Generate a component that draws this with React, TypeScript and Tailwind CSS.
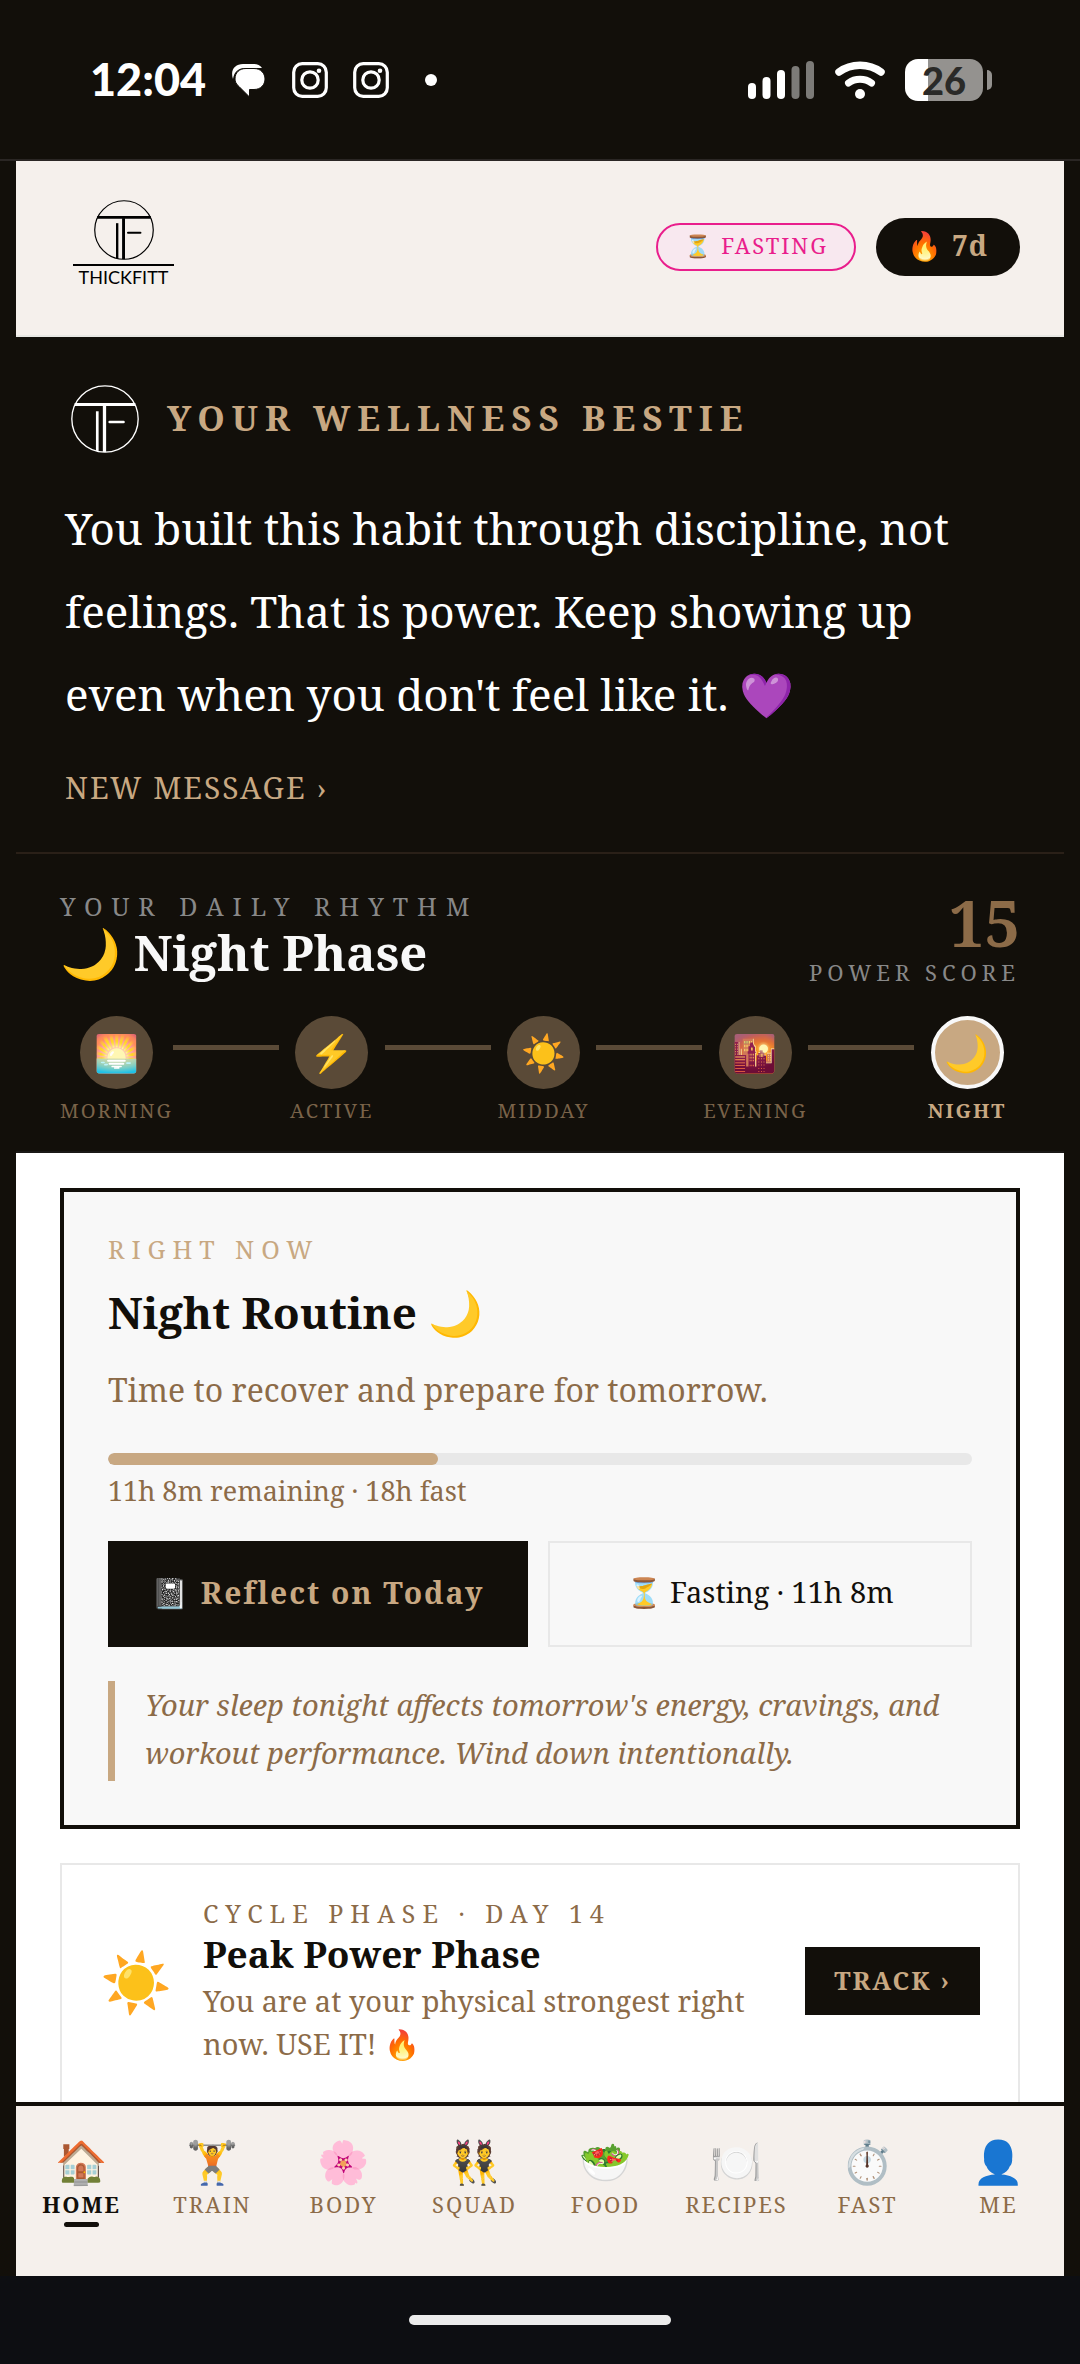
import React, { useState } from "react";

const phases = [
  { icon: "🌅", label: "MORNING" },
  { icon: "⚡", label: "ACTIVE" },
  { icon: "☀️", label: "MIDDAY" },
  { icon: "🌇", label: "EVENING" },
  { icon: "🌙", label: "NIGHT" },
];

const tabs = [
  { icon: "🏠", label: "HOME" },
  { icon: "🏋️", label: "TRAIN" },
  { icon: "🌸", label: "BODY" },
  { icon: "👯", label: "SQUAD" },
  { icon: "🥗", label: "FOOD" },
  { icon: "🍽️", label: "RECIPES" },
  { icon: "⏱️", label: "FAST" },
  { icon: "👤", label: "ME" },
];

const currentPhase = 4;

// minutes
const fastLength = 18 * 60;
const fastRemaining = 11 * 60 + 8;
const fastProgress = ((fastLength - fastRemaining) / fastLength) * 100;

function Monogram({ className }: { className: string }) {
  return (
    <svg viewBox="0 0 66 66" fill="none" stroke="currentColor" className={className} aria-hidden="true">
      <circle cx="33" cy="33" r="32.2" strokeWidth="1.3" />
      <path d="M3.5 19H62.5" strokeWidth="3" />
      <path d="M32.5 20V65" strokeWidth="3.2" />
      <path d="M25.5 25.5V64" strokeWidth="2.6" />
      <path d="M37.5 36H51" strokeWidth="2.4" strokeLinecap="round" />
    </svg>
  );
}

function InstagramIcon() {
  return (
    <svg viewBox="0 0 36 36" fill="none" stroke="white" className="size-9" aria-hidden="true">
      <rect x="1.7" y="1.7" width="32.6" height="32.6" rx="8.5" strokeWidth="3.2" />
      <circle cx="18" cy="18" r="8.2" strokeWidth="3.2" />
      <circle cx="27" cy="8.8" r="2.3" fill="white" stroke="none" />
    </svg>
  );
}

function StatusBar() {
  return (
    <div className="flex h-[161px] shrink-0 items-center justify-between border-b-2 border-[#2a2624] pr-[88px] pl-[90px] font-['Lato',sans-serif] text-white">
      <div className="flex items-center">
        <span className="text-[45px] leading-none font-black">12:04</span>
        <svg viewBox="0 0 34 34" className="ml-[26px] size-[34px]" aria-hidden="true">
          <path d="M1 16C-2 7 3 1 11 1h10c4 0 7 1 9 4H13C6 5 2 9 1 16Z" fill="white" />
          <path d="M14 5.500h8c7 0 11 5 11 10.500s-4 10.500-11 10.500h-4.500V34L7 23.500C4 21 3 18.500 3 16 3 9.500 7.500 5.500 14 5.500Z" fill="white" stroke="#120f0a" strokeWidth="1" />
        </svg>
        <div className="ml-[26px] flex items-center gap-[25px]">
          <InstagramIcon />
          <InstagramIcon />
        </div>
        <span className="ml-9 size-3 rounded-full bg-white" />
      </div>
      <div className="flex items-center gap-5">
        <svg viewBox="0 0 67 38" className="h-[38px] w-[67px]" fill="white" aria-hidden="true">
          <rect x="0" y="22" width="8" height="16" rx="4" />
          <rect x="14.500" y="16" width="8" height="22" rx="4" />
          <rect x="29" y="9" width="8" height="29" rx="4" />
          <rect x="43.500" y="5" width="8" height="33" rx="4" opacity=".45" />
          <rect x="58" y="0" width="8" height="38" rx="4" opacity=".45" />
        </svg>
        <svg viewBox="0 0 50 38" className="h-[38px] w-[50px]" fill="none" stroke="white" strokeLinecap="round" aria-hidden="true">
          <path d="M4 11C16 2 34 2 46 11" strokeWidth="7.500" />
          <path d="M13.500 22C20 17 30 17 36.500 22" strokeWidth="7" />
          <circle cx="25" cy="33" r="5" fill="white" stroke="none" />
        </svg>
        <div className="flex items-center gap-1">
          <span className="flex h-[42px] w-[78px] items-center justify-center rounded-[13px] bg-linear-to-r from-white from-30% to-[#94928f] to-30% text-[38px] leading-none font-black text-[#2a2a28]">
            26
          </span>
          <span className="h-5 w-[5px] rounded-r-full bg-[#94928f]" />
        </div>
      </div>
    </div>
  );
}

function Header() {
  return (
    <header className="flex h-44 shrink-0 items-start justify-between border-b-2 border-[#e8e8e4] bg-[#f5f0ec] pt-[39px] pr-11 pl-[57px]">
      <div className="flex w-[101px] flex-col items-center text-black">
        <Monogram className="size-[60px]" />
        <span className="mt-1 h-[2px] w-full bg-black" />
        <span className="mt-[2px] font-['Lato',sans-serif] text-[18px] leading-[18px]">THICKFITT</span>
      </div>
      <div className="mt-[18px] flex items-center gap-5">
        <button className="flex h-12 items-center rounded-full border-2 border-[#e91e8c] bg-[#f8e8ef] px-[26px] pb-1 text-[22px] tracking-[2px] whitespace-pre text-[#e91e8c]">
          ⏳ FASTING
        </button>
        <button className="flex h-[58px] items-center rounded-full bg-[#120f0a] px-8 pb-1 text-[28px] font-bold tracking-[1px] whitespace-pre text-[#c8a882]">
          🔥 7d
        </button>
      </div>
    </header>
  );
}

function Bestie() {
  return (
    <section className="flex flex-col items-start border-b-2 border-[#2a2018] px-[49px] pt-12 pb-[42px]">
      <div className="flex items-center gap-7 pl-[6px]">
        <Monogram className="size-[68px] text-white" />
        <h2 className="pb-[2px] text-[35px] font-bold tracking-[7px] text-[#c8a882]">YOUR WELLNESS BESTIE</h2>
      </div>
      <p className="mt-[34px] text-[44px] leading-[83px] text-white">
        You built this habit through discipline, not feelings. That is power. Keep showing up even when you don't feel
        like it. 💜
      </p>
      <button className="mt-[30px] text-[30px] leading-[44px] tracking-[2px] text-[#c8a882]">NEW MESSAGE ›</button>
    </section>
  );
}

function Rhythm() {
  return (
    <section className="border-b-2 border-[#1a1816] px-11 pt-9 pb-[26px]">
      <div className="flex items-start justify-between">
        <div>
          <p className="text-[25px] leading-8 tracking-[9px] text-[#888888]">YOUR DAILY RHYTHM</p>
          <h1 className="text-[49px] leading-[60px] font-bold text-[#f8f8f8]">🌙 Night Phase</h1>
        </div>
        <div className="flex flex-col items-end">
          <span className="text-[63px] leading-[66px] font-bold text-[#8c6b48]">15</span>
          <span className="text-[22px] leading-8 tracking-[5px] text-[#888888]">POWER SCORE</span>
        </div>
      </div>
      <div className="mt-7 flex">
        {phases.map((phase, i) => (
          <React.Fragment key={phase.label}>
            {i > 0 && <span className="mt-[29px] h-[5px] flex-1 bg-[#5a4a37]" />}
            <div className="flex flex-1 flex-col items-center">
              <span
                className={
                  i === currentPhase
                    ? "flex size-[73px] items-center justify-center rounded-full border-4 border-[#f8f8f8] bg-[#c8a882] text-[36px] leading-none"
                    : "flex size-[73px] items-center justify-center rounded-full bg-[#5a4a37] text-[36px] leading-none"
                }
              >
                {phase.icon}
              </span>
              <span
                className={
                  i === currentPhase
                    ? "mt-2 text-[20px] leading-7 font-bold tracking-[2px] text-[#c8a882]"
                    : "mt-2 text-[20px] leading-7 tracking-[2px] text-[#7a6349]"
                }
              >
                {phase.label}
              </span>
            </div>
          </React.Fragment>
        ))}
      </div>
    </section>
  );
}

function RightNow() {
  return (
    <section className="border-4 border-[#120f0a] bg-[#f8f8f8] p-11">
      <p className="text-[25px] leading-[26px] tracking-[7px] text-[#c8a882]">RIGHT NOW</p>
      <h2 className="mt-[18px] text-[44px] leading-[64px] font-bold text-[#120f0a]">Night Routine 🌙</h2>
      <p className="mt-5 text-[32px] leading-[52px] text-[#8c6b48]">Time to recover and prepare for tomorrow.</p>
      <div className="mt-[37px] h-3 overflow-hidden rounded-md bg-[#e8e8e8]">
        <div className="h-full rounded-md bg-[#c8a882]" style={{ width: `${fastProgress}%` }} />
      </div>
      <p className="mt-2 text-[27px] leading-9 text-[#8c6b48]">11h 8m remaining · 18h fast</p>
      <div className="mt-8 flex gap-5">
        <button className="h-[106px] flex-1 bg-[#120f0a] pb-1 text-[30px] font-bold tracking-[2px] text-[#c8a882]">
          📓 Reflect on Today
        </button>
        <button className="h-[106px] flex-1 border-2 border-[#e8e8e8] pb-1 text-[29px] text-[#120f0a]">
          ⏳ Fasting · 11h 8m
        </button>
      </div>
      <blockquote className="mt-[34px] border-l-[7px] border-[#c8a882] pb-1 pl-[30px] text-[29px] leading-[48px] text-[#8c6b48] italic">
        Your sleep tonight affects tomorrow's energy, cravings, and workout performance. Wind down intentionally.
      </blockquote>
    </section>
  );
}

function CyclePhase() {
  return (
    <section className="flex shrink-0 items-center border-2 border-[#e8e8e8] bg-white px-[38px] pt-8 pb-[38px]">
      <span className="w-[103px] shrink-0 text-[58px] leading-none">☀️</span>
      <div className="flex-1">
        <p className="text-[25px] leading-8 tracking-[7px] text-[#8c6b48]">CYCLE PHASE · DAY 14</p>
        <h3 className="text-[37px] leading-[50px] font-bold text-[#120f0a]">Peak Power Phase</h3>
        <p className="text-[29px] leading-[43px] text-[#8c6b48]">You are at your physical strongest right now. USE IT! 🔥</p>
      </div>
      <button className="ml-9 h-[68px] bg-[#120f0a] px-[29px] text-[25px] font-bold tracking-[2px] whitespace-nowrap text-[#c8a882]">
        TRACK ›
      </button>
    </section>
  );
}

function TabBar() {
  const [active, setActive] = useState("HOME");

  return (
    <nav className="flex h-[174px] shrink-0 border-t-4 border-[#120f0a] bg-[#f5f0ec] pt-7">
      {tabs.map((tab) => (
        <button
          key={tab.label}
          onClick={() => setActive(tab.label)}
          className="flex flex-1 basis-0 flex-col items-center"
        >
          <span className="text-[42px] leading-[54px]">{tab.icon}</span>
          <span
            className={
              tab.label === active
                ? "text-[22px] leading-8 font-bold tracking-[2px] text-[#120f0a]"
                : "text-[22px] leading-8 tracking-[2px] text-[#8c6b48]"
            }
          >
            {tab.label}
          </span>
          {tab.label === active && <span className="mt-[2px] h-[5px] w-[35px] rounded-full bg-[#120f0a]" />}
        </button>
      ))}
    </nav>
  );
}

export default function App() {
  return (
    <div className="flex h-screen flex-col overflow-hidden bg-[#120f0a] font-['Noto_Serif','Liberation_Serif','Noto_Color_Emoji',serif]">
      <StatusBar />
      <div className="mx-4 flex min-h-0 flex-1 flex-col">
        <Header />
        <main className="min-h-0 flex-1 overflow-hidden">
          <Bestie />
          <Rhythm />
          <div className="flex flex-col gap-[34px] bg-white px-11 py-[35px]">
            <RightNow />
            <CyclePhase />
          </div>
        </main>
        <TabBar />
      </div>
      <div className="flex h-[88px] shrink-0 items-center justify-center bg-[#0d0e12]">
        <span className="h-[10px] w-[262px] rounded-full bg-[#ebebeb]" />
      </div>
    </div>
  );
}
